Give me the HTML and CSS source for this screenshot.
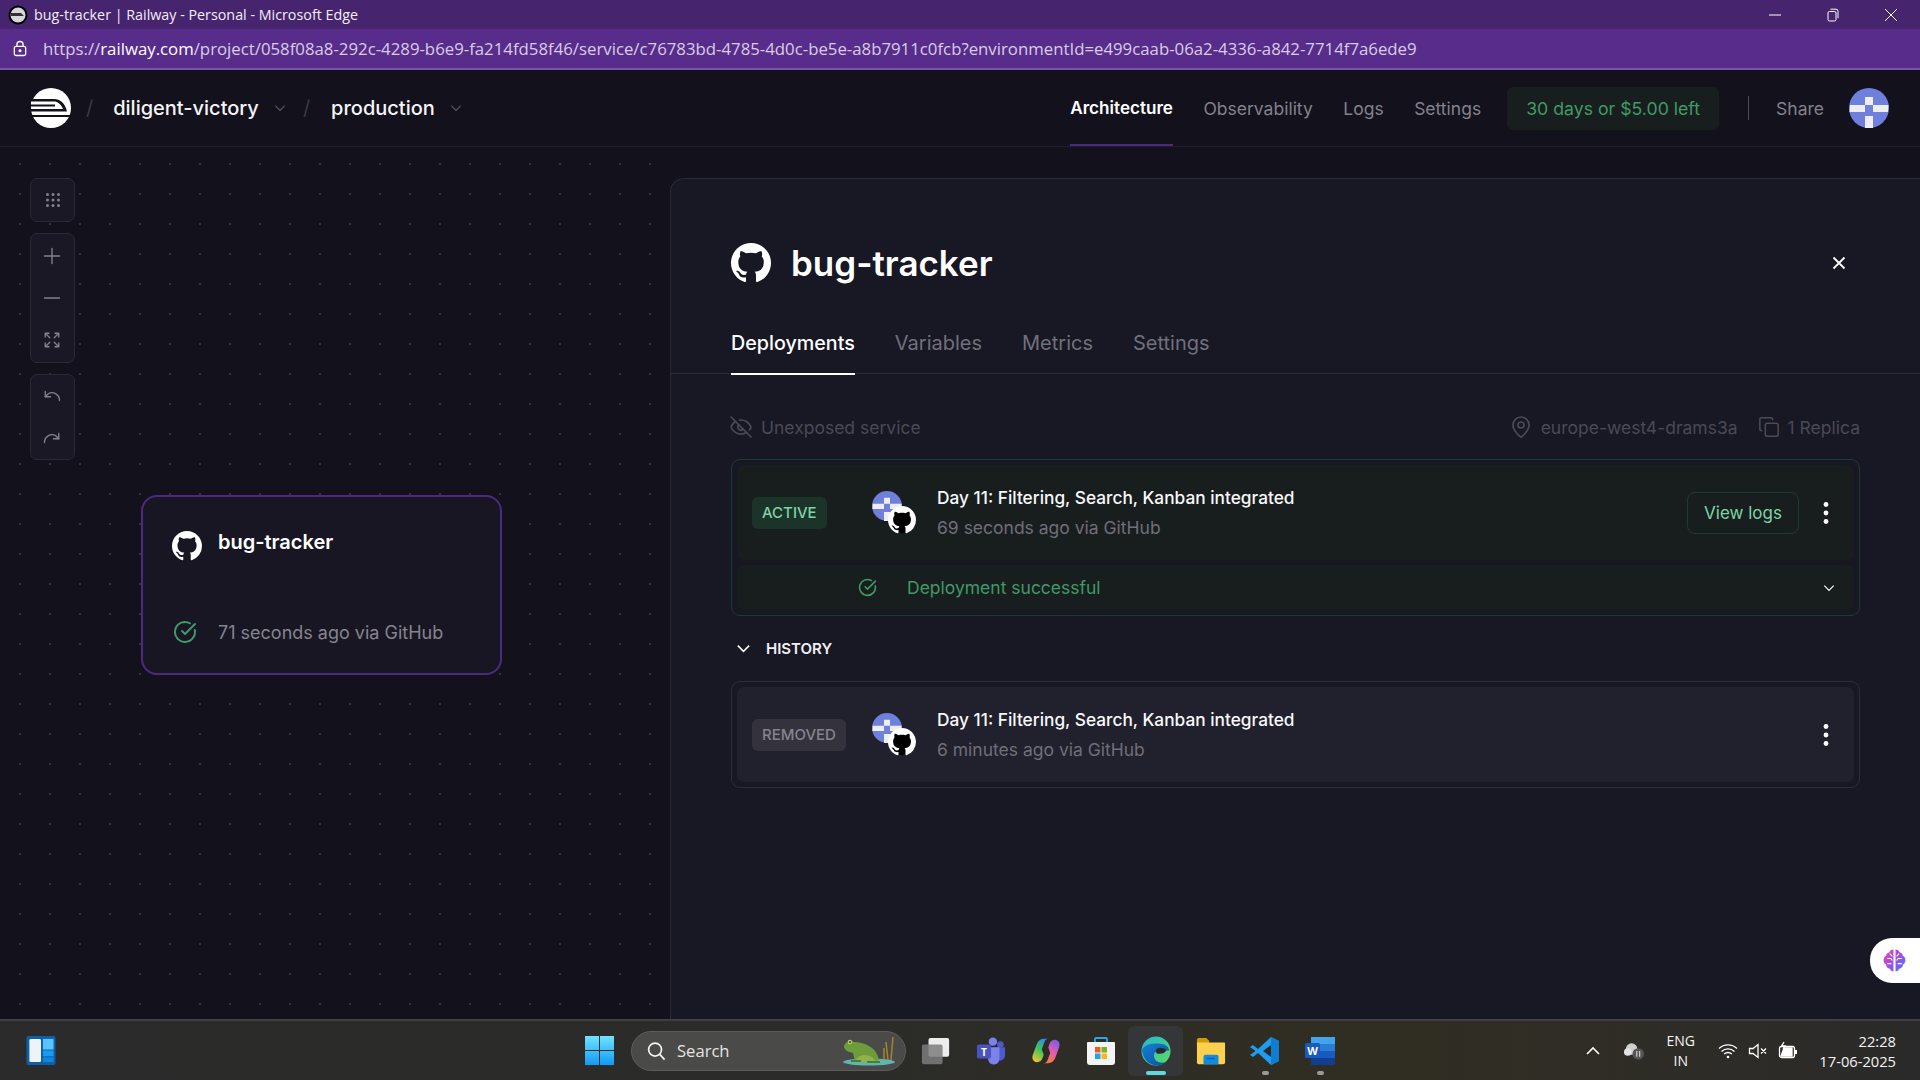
FILE: index.html
```html
<!DOCTYPE html>
<html lang="en">
<head>
    <meta charset="UTF-8">
    <title>bug-tracker | Railway</title>
    <link rel="stylesheet" href="styles.css">
</head>
<body>
    <!-- shared icons -->
    <svg class="sprite" width="0" height="0">
        <symbol id="gh" viewBox="0 0 16 16"><path fill="currentColor" d="M8 0C3.58 0 0 3.58 0 8c0 3.54 2.29 6.53 5.47 7.59.4.07.55-.17.55-.38 0-.19-.01-.82-.01-1.49-2.01.37-2.53-.49-2.69-.94-.09-.23-.48-.94-.82-1.13-.28-.15-.68-.52-.01-.53.63-.01 1.08.58 1.23.82.72 1.21 1.87.87 2.33.66.07-.52.28-.87.51-1.07-1.78-.2-3.64-.89-3.64-3.95 0-.87.31-1.59.82-2.15-.08-.2-.36-1.02.08-2.12 0 0 .67-.21 2.2.82.64-.18 1.32-.27 2-.27.68 0 1.36.09 2 .27 1.53-1.04 2.2-.82 2.2-.82.44 1.1.16 1.92.08 2.12.51.56.82 1.27.82 2.15 0 3.07-1.87 3.75-3.65 3.95.29.25.54.73.54 1.48 0 1.07-.01 1.93-.01 2.2 0 .21.15.46.55.38A8.013 8.013 0 0016 8c0-4.42-3.58-8-8-8z"/></symbol>
        <symbol id="check" viewBox="0 0 24 24"><path d="M21.8 10A10 10 0 1 1 17 3.3"/><path d="m9 11 3 3L22 4"/></symbol>
        <symbol id="chev" viewBox="0 0 24 24"><path d="m4 8 8 8 8-8"/></symbol>
        <symbol id="kebab" viewBox="0 0 8 24"><circle cx="4" cy="3.500" r="2.400"/><circle cx="4" cy="12" r="2.400"/><circle cx="4" cy="20.500" r="2.400"/></symbol>
        <symbol id="identicon" viewBox="0 0 40 40">
            <circle cx="20" cy="20" r="20" fill="#6f7fdc"/>
            <path fill="#eeeef2" d="M16 9h8v8h-8zM1 17h15v7H.5zM24 17h15.5l-.5 7H24zM16 28h8v12h-8z"/>
        </symbol>
        <symbol id="ghbadge" viewBox="0 0 16 16"><circle cx="8" cy="8" r="7.500" fill="#000"/><use href="#gh" color="#fff"/></symbol>
    </svg>

    <div class="titlebar">
        <svg class="tab-icon" viewBox="0 0 20 20"><circle cx="10" cy="10" r="9.500" fill="#000"/><circle cx="10" cy="10" r="7.500" fill="#d8d8dc"/><path d="M3 8h10l3 3H3z" fill="#333"/></svg>
        <span class="title-text">bug-tracker | Railway - Personal - Microsoft Edge</span>
        <div class="win-controls">
            <svg viewBox="0 0 14 14"><path d="M1 7h12"/></svg>
            <svg viewBox="0 0 14 14"><rect x="2" y="3.500" width="8" height="9.500" rx="1.500"/><path d="M4.500 1.200h5.500a2 2 0 0 1 2 2v7"/></svg>
            <svg viewBox="0 0 14 14"><path d="m1 1 12 12M13 1 1 13"/></svg>
        </div>
    </div>
    <div class="urlbar">
        <svg class="lock" viewBox="0 0 16 18"><rect x="1.500" y="6.500" width="13" height="10.500" rx="2"/><path d="M4.500 6.500V4.500a3.500 3.500 0 0 1 7 0v2"/><circle cx="8" cy="11.500" r="1" fill="#fff"/></svg>
        <span class="url"><span class="url-dim">https://</span>railway.com<span class="url-dim">/project/058f08a8-292c-4289-b6e9-fa214fd58f46/service/c76783bd-4785-4d0c-be5e-a8b7911c0fcb?environmentId=e499caab-06a2-4336-a842-7714f7a6ede9</span></span>
    </div>

    <header class="topnav">
        <svg class="logo" viewBox="0 0 40 40">
            <circle cx="20" cy="20" r="20" fill="#fff"/>
            <path fill="#13111c" d="M0 11h23c6 0 11 4 13 12.500H0z"/>
            <path fill="#fff" d="M0 13.500h23c3.500 0 7 2.500 9 7.500H0z"/>
            <path fill="#13111c" d="M0 16.500h24v2H0zM0 27h40v2H0z"/>
        </svg>
        <span class="crumb-sep first">/</span>
        <span class="crumb">diligent-victory</span>
        <svg class="crumb-chev"><use href="#chev"/></svg>
        <span class="crumb-sep">/</span>
        <span class="crumb">production</span>
        <svg class="crumb-chev"><use href="#chev"/></svg>

        <nav class="nav-links">
            <a class="nav-link active">Architecture</a>
            <a class="nav-link">Observability</a>
            <a class="nav-link">Logs</a>
            <a class="nav-link">Settings</a>
        </nav>
        <div class="trial">30 days or $5.00 left</div>
        <div class="nav-divider"></div>
        <a class="nav-link share">Share</a>
        <svg class="avatar"><use href="#identicon"/></svg>
    </header>

    <main class="workspace">
        <section class="canvas">
            <div class="tool-group">
                <button class="tool">
                    <svg viewBox="0 0 16 16" class="fill-icon"><circle cx="2.500" cy="2.500" r="1.500"/><circle cx="8" cy="2.500" r="1.500"/><circle cx="13.500" cy="2.500" r="1.500"/><circle cx="2.500" cy="8" r="1.500"/><circle cx="8" cy="8" r="1.500"/><circle cx="13.500" cy="8" r="1.500"/><circle cx="2.500" cy="13.500" r="1.500"/><circle cx="8" cy="13.500" r="1.500"/><circle cx="13.500" cy="13.500" r="1.500"/></svg>
                </button>
            </div>
            <div class="tool-group">
                <button class="tool"><svg viewBox="0 0 24 24"><path d="M12 2v20M2 12h20"/></svg></button>
                <button class="tool"><svg viewBox="0 0 24 24"><path d="M2 12h20"/></svg></button>
                <button class="tool"><svg viewBox="0 0 24 24"><path d="m15 15 6 6M15 9l6-6M21 16v5h-5M21 8V3h-5M3 16v5h5M3 21l6-6M3 8V3h5M9 9 3 3"/></svg></button>
            </div>
            <div class="tool-group">
                <button class="tool"><svg viewBox="0 0 24 24"><path d="M3 6v7h7"/><path d="M3 13l4-4a10 10 0 0 1 15 9"/></svg></button>
                <button class="tool"><svg viewBox="0 0 24 24"><path d="M21 6v7h-7"/><path d="M21 13l-4-4a10 10 0 0 0-15 9"/></svg></button>
            </div>

            <article class="node">
                <div class="node-head">
                    <svg class="node-gh"><use href="#gh"/></svg>
                    <span class="node-name">bug-tracker</span>
                </div>
                <div class="node-foot">
                    <svg class="node-check"><use href="#check"/></svg>
                    <span class="node-status">71 seconds ago via GitHub</span>
                </div>
            </article>
        </section>

        <section class="panel">
            <div class="panel-head">
                <svg class="panel-gh"><use href="#gh"/></svg>
                <h1 class="panel-title">bug-tracker</h1>
                <svg class="close" viewBox="0 0 14 14"><path d="m1.500 1.500 11 11M12.500 1.500l-11 11"/></svg>
            </div>
            <div class="tabs">
                <a class="tab active">Deployments</a>
                <a class="tab">Variables</a>
                <a class="tab">Metrics</a>
                <a class="tab">Settings</a>
            </div>

            <div class="panel-body">
                <div class="meta">
                    <span class="meta-item eye">
                        <svg viewBox="0 0 24 24"><path d="M10.700 5.100a10.700 10.700 0 0 1 11.200 6.600 1 1 0 0 1 0 .7 10.700 10.700 0 0 1-1.400 2.500"/><path d="M14.100 14.200a3 3 0 0 1-4.200-4.300"/><path d="M17.500 17.500a10.700 10.700 0 0 1-15.400-5.200 1 1 0 0 1 0-.7 10.700 10.700 0 0 1 4.400-5.100"/><path d="m2 2 20 20"/></svg>
                        Unexposed service
                    </span>
                    <span class="meta-right">
                        <span class="meta-item">
                            <svg viewBox="0 0 24 24"><path d="M20 10c0 5-5.500 10.200-7.400 11.800a1 1 0 0 1-1.200 0C9.500 20.200 4 15 4 10a8 8 0 0 1 16 0"/><circle cx="12" cy="10" r="3"/></svg>
                            europe-west4-drams3a
                        </span>
                        <span class="meta-item copies">
                            <svg viewBox="0 0 24 24"><rect width="14" height="14" x="8" y="8" rx="2"/><path d="M4 16c-1.100 0-2-.9-2-2V4c0-1.100.9-2 2-2h10c1.100 0 2 .9 2 2"/></svg>
                            1 Replica
                        </span>
                    </span>
                </div>

                <div class="deploy deploy-active">
                    <div class="deploy-row">
                        <div class="badge-cell"><span class="badge badge-active">ACTIVE</span></div>
                        <div class="deploy-avatar">
                            <svg class="who"><use href="#identicon"/></svg>
                            <svg class="via"><use href="#ghbadge"/></svg>
                        </div>
                        <div class="deploy-text">
                            <div class="commit">Day 11: Filtering, Search, Kanban integrated</div>
                            <div class="when">69 seconds ago via GitHub</div>
                        </div>
                        <div class="deploy-actions">
                            <button class="logs-btn">View logs</button>
                            <svg class="kebab"><use href="#kebab"/></svg>
                        </div>
                    </div>
                    <div class="deploy-status">
                        <svg class="status-check"><use href="#check"/></svg>
                        <span class="status-text">Deployment successful</span>
                        <svg class="status-chev"><use href="#chev"/></svg>
                    </div>
                </div>

                <div class="history-head">
                    <svg class="history-chev"><use href="#chev"/></svg>
                    <span>HISTORY</span>
                </div>

                <div class="deploy deploy-old">
                    <div class="deploy-row">
                        <div class="badge-cell"><span class="badge badge-removed">REMOVED</span></div>
                        <div class="deploy-avatar">
                            <svg class="who"><use href="#identicon"/></svg>
                            <svg class="via"><use href="#ghbadge"/></svg>
                        </div>
                        <div class="deploy-text">
                            <div class="commit">Day 11: Filtering, Search, Kanban integrated</div>
                            <div class="when">6 minutes ago via GitHub</div>
                        </div>
                        <div class="deploy-actions">
                            <svg class="kebab"><use href="#kebab"/></svg>
                        </div>
                    </div>
                </div>
            </div>
        </section>

        <div class="side-tab">
            <svg viewBox="0 0 24 24">
                <defs><linearGradient id="brain" x1="0" x2="1" y1="0" y2="1"><stop offset="0" stop-color="#f0489a"/><stop offset=".5" stop-color="#a24de8"/><stop offset="1" stop-color="#3f7df0"/></linearGradient></defs>
                <path fill="url(#brain)" d="M11 1.500c-2 0-3.300 1-3.700 2.500C5.400 4.200 4 5.600 4 7.400c-1.700.8-2.500 2.400-2.500 4.300 0 1.800.8 3.300 2.400 4.200.1 2.300 1.700 3.800 3.600 4 .6 1.500 2 2.600 3.500 2.600zM13 1.500c2 0 3.300 1 3.700 2.500 1.900.2 3.300 1.600 3.300 3.400 1.700.8 2.500 2.400 2.500 4.300 0 1.800-.8 3.300-2.400 4.200-.1 2.300-1.700 3.800-3.600 4-.6 1.500-2 2.600-3.500 2.600z"/>
                <path fill="none" stroke="#fff" stroke-width="1" d="M5 10h3.500l1.500 2M19 10h-3.500L14 12M5 15h4M19 15h-4M7.500 5.500 10 8M16.500 5.500 14 8"/>
            </svg>
        </div>
    </main>

    <footer class="taskbar">
        <svg class="widgets" viewBox="0 0 30 30">
            <rect width="30" height="30" rx="2" fill="#0f5ea8"/>
            <rect x="3" y="3" width="12" height="24" rx="1.500" fill="#eef3f8"/>
            <rect x="17" y="3" width="11" height="11" fill="#56c4ff"/><rect x="17" y="15" width="11" height="6" fill="#1a9bf0"/><rect x="17" y="22" width="11" height="5" fill="#0f86dc"/>
        </svg>
        <svg class="start" viewBox="0 0 29 29">
            <defs><linearGradient id="winblue" x1="0" x2="0" y1="0" y2="1"><stop offset="0" stop-color="#6fe3ff"/><stop offset="1" stop-color="#0f9bf5"/></linearGradient></defs>
            <path fill="url(#winblue)" d="M0 0h14v14H0zM15 0h14v14H15zM0 15h14v14H0zM15 15h14v14H15z"/>
        </svg>
        <div class="search">
            <svg class="search-glass" viewBox="0 0 20 20"><circle cx="8.500" cy="8.500" r="6.800"/><path d="m13.500 13.500 5 5.500"/></svg>
            <span class="search-label">Search</span>
            <svg class="frog" viewBox="0 0 56 30">
                <ellipse cx="28" cy="26" rx="26" ry="3.500" fill="#5fb6b0"/>
                <path d="M47 24 45 6M50 24 52 1M43 24V12" stroke="#a5842e" stroke-width="1.500" fill="none"/>
                <path d="M3 10c1-4 6-6 10-4 9 0 23 5 25 18l-8 2H14l-2-9C7 16 3 14 3 10z" fill="#6f9c3a"/>
                <path d="M14 26c2-8 14-10 20-2l2 2z" fill="#8fb24a"/>
                <path d="M10 24h10v2H10zM26 25h13v2H26z" fill="#4f7f2e"/>
                <circle cx="9" cy="6" r="2.300" fill="#b7d063"/><circle cx="9" cy="6" r="1" fill="#2f3d18"/>
            </svg>
        </div>
        <div class="apps">
            <div class="app">
                <svg viewBox="0 0 32 30"><rect x="8" y="1" width="22" height="20" rx="2" fill="#ececec"/><rect x="1" y="8" width="22" height="21" rx="2" fill="#7d7d7d" fill-opacity=".85"/></svg>
            </div>
            <div class="app">
                <svg viewBox="0 0 32 30">
                    <circle cx="18" cy="5" r="4.500" fill="#7b83eb"/><circle cx="26" cy="8" r="3.500" fill="#5059c9"/>
                    <path d="M20 11h11v9a5 5 0 0 1-8 4z" fill="#5059c9"/><path d="M10 11h15v12a6 6 0 0 1-12 1z" fill="#7b83eb"/>
                    <rect x="1" y="8" width="15" height="15" rx="2" fill="#4b53bc"/>
                    <text x="8.500" y="20" class="app-letter">T</text>
                </svg>
            </div>
            <div class="app">
                <svg viewBox="0 0 32 30">
                    <defs>
                        <linearGradient id="cop1" x1="0.700" x2="0.200" y1="0" y2="1"><stop offset="0" stop-color="#2f8be8"/><stop offset=".45" stop-color="#3cc45c"/><stop offset="1" stop-color="#f4c430"/></linearGradient>
                        <linearGradient id="cop2" x1="0.300" x2="0.800" y1="1" y2="0"><stop offset="0" stop-color="#f4803a"/><stop offset=".5" stop-color="#e45bb0"/><stop offset="1" stop-color="#7a5be8"/></linearGradient>
                    </defs>
                    <path fill="url(#cop1)" d="M14 2c-4 0-6.500 2-8 6L2 19c-1.500 4 .5 8 4.500 8 3 0 5-2 6-5l1-3-2-6 3-8c.5-1.500 2-3 4-3z"/>
                    <path fill="url(#cop2)" d="M18 28c4 0 6.500-2 8-6l4-11c1.500-4-.5-8-4.500-8-3 0-5 2-6 5l-1 3 2 6-3 8c-.5 1.500-2 3-4 3z"/>
                </svg>
            </div>
            <div class="app">
                <svg viewBox="0 0 30 30">
                    <path d="M9 7V3a1 1 0 0 1 1-1h10a1 1 0 0 1 1 1v4" fill="none" stroke="#29a8e8" stroke-width="1.800"/>
                    <path d="M2 6h26a1 1 0 0 1 1 1v19a3 3 0 0 1-3 3H4a3 3 0 0 1-3-3V7a1 1 0 0 1 1-1z" fill="#f4f4f4"/>
                    <rect x="9" y="11" width="5.500" height="5.500" fill="#ef5a24"/><rect x="15.500" y="11" width="5.500" height="5.500" fill="#7ab51d"/>
                    <rect x="9" y="17.500" width="5.500" height="5.500" fill="#1fa5e8"/><rect x="15.500" y="17.500" width="5.500" height="5.500" fill="#fbb813"/>
                </svg>
            </div>
            <div class="app app-open">
                <svg viewBox="0 0 32 32">
                    <defs>
                        <linearGradient id="edge1" x1="0" x2="1" y1="0" y2="1"><stop offset="0" stop-color="#1fb7d6"/><stop offset="1" stop-color="#5fdc5a"/></linearGradient>
                        <linearGradient id="edge2" x1="0" x2="1" y1="0" y2="1"><stop offset="0" stop-color="#1580d8"/><stop offset="1" stop-color="#0c4f9e"/></linearGradient>
                    </defs>
                    <circle cx="16" cy="16" r="15.500" fill="url(#edge1)"/>
                    <path fill="url(#edge2)" d="M1 15C2 25 9 31.500 17 31.500c4 0 8-2 10-4-5 2-12 1-13-5-1-4 2-7 5-7h11C30 11 25 8 18 8 9 8 3 10 1 15z"/>
                    <path fill="#2a2a2c" d="M20 19c3 0 6-1 7-4-2-2-6-3-9-2-3 1-3 5 0 6z"/>
                </svg>
                <span class="run-mark active"></span>
            </div>
            <div class="app">
                <svg viewBox="0 0 32 28"><path d="M1 2a2 2 0 0 1 2-2h8l3 3v3H1z" fill="#d49a06"/><path d="M1 5h29a1 1 0 0 1 1 1v20a2 2 0 0 1-2 2H3a2 2 0 0 1-2-2z" fill="#fdd14e"/><path d="M8 20a2 2 0 0 1 2-2h12a2 2 0 0 1 2 2v8H8z" fill="#0f8be0"/><path d="M12 22h8" stroke="#0a5fa8" stroke-width="1.500"/></svg>
            </div>
            <div class="app">
                <svg viewBox="0 0 30 30"><path d="M21 1 29 5v20l-8 4L8 17l-5 4-3-2 5.500-4L0 11l3-2 5 4z" fill="#1f9cf0"/><path d="M21 9 13 15l8 6z" fill="#2b2a28"/><path d="M21 1 29 5v20l-8 4z" fill="#0e7fd0"/></svg>
                <span class="run-mark"></span>
            </div>
            <div class="app">
                <svg viewBox="0 0 30 30">
                    <rect x="6" y="1" width="24" height="7.500" fill="#41a5ee"/><rect x="6" y="8" width="24" height="7.500" fill="#2b7cd3"/><rect x="6" y="15" width="24" height="7.500" fill="#185abd"/><rect x="6" y="22" width="24" height="7" fill="#103f91"/>
                    <rect y="7" width="15" height="15" rx="1.500" fill="#185abd"/>
                    <text x="7.500" y="19" class="app-letter">W</text>
                </svg>
                <span class="run-mark"></span>
            </div>
        </div>
        <div class="tray">
            <svg class="tray-chev" viewBox="0 0 14 10"><path d="m1 8 6-6 6 6"/></svg>
            <svg class="tray-cloud" viewBox="0 0 22 20"><circle cx="9" cy="8" r="6" fill="#cfcfcf"/><circle cx="5" cy="11" r="4" fill="#e4e4e4"/><circle cx="16" cy="13" r="6" fill="#555"/><path d="M14.500 10v6M17.500 10v6" stroke="#eee" stroke-width="1"/></svg>
            <div class="lang"><span>ENG</span><span>IN</span></div>
            <div class="tray-icons">
                <svg viewBox="0 0 20 16"><path d="M1 5.500a13 13 0 0 1 18 0M3.500 8.500a9.500 9.500 0 0 1 13 0M6.200 11a5.500 5.500 0 0 1 7.600 0"/><circle cx="10" cy="14" r="1.300" fill="#fff" stroke="none"/></svg>
                <svg viewBox="0 0 20 16"><path d="M1.500 5.500H5L10 1.500v13L5 10.500H1.500zM13 5.500l5 5M18 5.500l-5 5"/></svg>
                <svg viewBox="0 0 20 18"><rect x="1.500" y="4.500" width="15" height="11" rx="2"/><path d="M3 14h11V6H6z" fill="#fff"/><path d="M18 8v4" stroke-width="2"/><path d="M6 0 3.500 4H7L5 7"/></svg>
            </div>
            <div class="clock"><span>22:28</span><span>17-06-2025</span></div>
        </div>
    </footer>
</body>
</html>
```

FILE: styles.css
```css
* {
    box-sizing: border-box;
}
body {
    margin: 0;
    width: 1920px;
    height: 1080px;
    overflow: hidden;
    display: flex;
    flex-direction: column;
    background-color: #13111c;
    color: #fff;
    font-family: 'Inter', sans-serif;
}
.sprite {
    position: absolute;
}

/* browser chrome */
.titlebar {
    height: 29px;
    flex: none;
    display: flex;
    align-items: center;
    padding-left: 8px;
    background-color: #46246e;
    font-family: 'Open Sans', sans-serif;
}
.tab-icon {
    width: 20px;
    height: 20px;
    margin-right: 6px;
}
.title-text {
    font-size: 14.3px;
    color: #f2eef7;
}
.win-controls {
    margin-left: auto;
    display: flex;
    gap: 44px;
    padding-right: 22px;
}
.win-controls svg {
    width: 14px;
    height: 14px;
    fill: none;
    stroke: #fff;
    stroke-width: 1;
}
.urlbar {
    height: 41px;
    flex: none;
    display: flex;
    align-items: center;
    padding-left: 13px;
    background-color: #582c8b;
    border-bottom: 2px solid #7a58a8;
    font-family: 'Open Sans', sans-serif;
}
.lock {
    width: 14px;
    height: 17px;
    margin-right: 16px;
    fill: none;
    stroke: #fff;
    stroke-width: 1.5;
}
.url {
    font-size: 16.8px;
    color: #fff;
    white-space: nowrap;
}
.url-dim {
    color: #d9cde8;
}

/* railway top navigation */
.topnav {
    height: 77px;
    flex: none;
    display: flex;
    align-items: center;
    padding-left: 31px;
    padding-right: 31px;
    border-bottom: 1px solid #201e2b;
    background-color: #13111c;
}
.logo {
    width: 40px;
    height: 40px;
}
.crumb-sep {
    font-size: 20px;
    color: #3a3945;
    margin-left: 16px;
    margin-right: 21px;
}
.crumb-sep.first {
    margin-left: 15px;
    margin-right: 20px;
}
.crumb {
    font-size: 20px;
    font-weight: 500;
    color: #f5f5f7;
}
.crumb-chev {
    width: 14px;
    height: 14px;
    margin-left: 14px;
    fill: none;
    stroke: #5b5a65;
    stroke-width: 2;
}
.nav-links {
    margin-left: auto;
    display: flex;
    gap: 30.5px;
    height: 76px;
}
.nav-link {
    font-size: 17.5px;
    color: #83828c;
    display: flex;
    align-items: center;
    height: 76px;
}
.nav-link.active {
    color: #fff;
    font-size: 17.1px;
    font-weight: 600;
    border-bottom: 2px solid #4c2a80;
}
.trial {
    margin-left: 26px;
    height: 43px;
    padding: 0 19px;
    display: flex;
    align-items: center;
    border-radius: 6px;
    background-color: #181e1e;
    color: #3e9a67;
    font-size: 17.7px;
}
.nav-divider {
    width: 1px;
    height: 24px;
    margin-left: 29px;
    margin-right: 27px;
    background-color: #4a4953;
}
.avatar {
    width: 40px;
    height: 40px;
    margin-left: 25px;
}

/* workspace */
.workspace {
    flex: 1;
    min-height: 0;
    display: flex;
    position: relative;
}
.canvas {
    width: 670px;
    flex: none;
    position: relative;
    padding: 31px 0 0 30px;
    background-image: radial-gradient(circle at 20px 17px, #32313d 0.9px, transparent 1.2px);
    background-size: 30px 30px;
    background-position: 0 0;
}
.tool-group {
    width: 45px;
    margin-bottom: 11px;
    border: 1px solid #2a2935;
    border-radius: 7px;
    background-color: #191824;
}
.tool {
    display: flex;
    align-items: center;
    justify-content: center;
    width: 100%;
    height: 42.4px;
    padding: 0 2px 0 0;
    border: none;
    background: none;
}
.tool svg {
    width: 18px;
    height: 18px;
    fill: none;
    stroke: #83828c;
    stroke-width: 1.8;
    stroke-linecap: round;
    stroke-linejoin: round;
}
.tool svg.fill-icon {
    width: 16px;
    height: 16px;
    margin-left: 2px;
    fill: #83828c;
    stroke: none;
}
.node {
    position: absolute;
    left: 141px;
    top: 348px;
    width: 361px;
    height: 180px;
    padding: 34px 0 0 29px;
    border: 2px solid #4c2a80;
    border-radius: 16px;
    background-color: #181622;
}
.node-head {
    display: flex;
    align-items: flex-start;
    height: 62px;
}
.node-gh {
    width: 30px;
    height: 30px;
    color: #fff;
}
.node-name {
    margin-left: 16px;
    margin-top: -1px;
    font-size: 20px;
    font-weight: 600;
    line-height: 24px;
}
.node-foot {
    display: flex;
    align-items: center;
    margin-top: 27px;
}
.node-check {
    width: 24px;
    height: 24px;
    margin-left: 1px;
    fill: none;
    stroke: #3e9a67;
    stroke-width: 2;
    stroke-linecap: round;
    stroke-linejoin: round;
}
.node-status {
    margin-left: 21px;
    font-size: 18px;
    color: #85848f;
}

/* service panel */
.panel {
    flex: 1;
    margin-top: 31px;
    border-top: 1px solid #2a2935;
    border-left: 1px solid #2a2935;
    border-top-left-radius: 14px;
    background-color: #181724;
}
.panel-head {
    display: flex;
    align-items: center;
    height: 40px;
    margin-top: 64px;
    padding: 0 74px 0 60px;
}
.panel-gh {
    width: 40px;
    height: 40px;
    color: #fff;
}
.panel-title {
    margin: 0 0 0 20px;
    font-size: 35px;
    font-weight: 600;
}
.close {
    margin-left: auto;
    width: 14px;
    height: 14px;
    fill: none;
    stroke: #fff;
    stroke-width: 1.8;
}
.tabs {
    display: flex;
    gap: 40px;
    height: 46px;
    margin-top: 45px;
    padding-left: 60px;
    border-bottom: 1px solid #2c2b37;
}
.tab {
    height: 47px;
    line-height: 30px;
    font-size: 20px;
    color: #71707b;
}
.tab.active {
    color: #fff;
    font-size: 19.7px;
    font-weight: 500;
    border-bottom: 2px solid #fff;
}
.panel-body {
    padding: 39px 60px 0 60px;
}
.meta {
    display: flex;
    justify-content: space-between;
    height: 28px;
    margin-bottom: 18px;
}
.meta-item {
    display: flex;
    align-items: center;
    font-size: 17.5px;
    color: #4a4954;
}
.meta-item svg {
    width: 24px;
    height: 24px;
    margin-right: 8px;
    fill: none;
    stroke: #4a4954;
    stroke-width: 1.7;
    stroke-linecap: round;
    stroke-linejoin: round;
}
.meta-item.eye svg {
    margin-left: -2px;
}
.meta-item.copies svg {
    width: 22px;
    height: 22px;
}
.meta-right {
    display: flex;
    gap: 20px;
}
.deploy {
    display: flex;
    flex-direction: column;
    gap: 5px;
    padding: 5px;
    border: 1px solid;
    border-radius: 9px;
}
.deploy-active {
    border-color: #1f3a2e;
}
.deploy-old {
    border-color: #2e2d3a;
}
.deploy-row {
    display: flex;
    align-items: center;
    height: 95px;
    padding-left: 15px;
    border-radius: 7px;
}
.deploy-active .deploy-row {
    background-color: #181e1e;
}
.deploy-old .deploy-row {
    background-color: #21202d;
}
.badge-cell {
    width: 120px;
    flex: none;
}
.badge {
    display: inline-block;
    height: 32px;
    line-height: 32px;
    padding: 0 10px;
    border-radius: 6px;
    font-size: 15px;
    font-weight: 500;
}
.badge-active {
    background-color: #1b3329;
    color: #7ed4a6;
}
.badge-removed {
    background-color: #33323d;
    color: #85848e;
}
.deploy-avatar {
    position: relative;
    width: 65px;
    height: 44px;
    flex: none;
}
.who {
    width: 30px;
    height: 30px;
}
.via {
    position: absolute;
    left: 16px;
    top: 15px;
    width: 28px;
    height: 28px;
}
.commit {
    font-size: 17.3px;
    font-weight: 500;
    line-height: 24px;
    color: #f8f8fa;
}
.when {
    margin-top: 6px;
    font-size: 17.5px;
    line-height: 24px;
    color: #6f6e79;
}
.deploy-actions {
    margin-left: auto;
    display: flex;
    align-items: center;
    gap: 23px;
    padding-right: 24px;
}
.logs-btn {
    width: 112px;
    height: 42px;
    padding: 0;
    border: 1px solid #1f3a2e;
    border-radius: 8px;
    background: none;
    color: #7ed4a6;
    font-family: inherit;
    font-size: 17px;
}
.kebab {
    width: 8px;
    height: 24px;
    fill: #fff;
}
.deploy-status {
    display: flex;
    align-items: center;
    height: 45px;
    padding-left: 121px;
    padding-right: 18px;
    border-radius: 7px;
    background-color: #181e1e;
}
.status-check {
    width: 19px;
    height: 19px;
    fill: none;
    stroke: #3e9a67;
    stroke-width: 2;
    stroke-linecap: round;
    stroke-linejoin: round;
}
.status-text {
    margin-left: 30px;
    font-size: 17.5px;
    color: #3e9a67;
}
.status-chev {
    margin-left: auto;
    width: 14px;
    height: 14px;
    fill: none;
    stroke: #fff;
    stroke-width: 2;
}
.history-head {
    display: flex;
    align-items: center;
    height: 20px;
    margin: 22px 0 23px;
    padding-left: 4px;
    font-size: 15px;
    font-weight: 600;
    color: #f0f0f3;
}
.history-chev {
    width: 17px;
    height: 17px;
    margin-right: 14px;
    fill: none;
    stroke: #fff;
    stroke-width: 2.2;
}
.side-tab {
    position: absolute;
    right: 0;
    top: 791px;
    width: 50px;
    height: 45px;
    display: flex;
    align-items: center;
    padding-left: 12px;
    border-radius: 22px 0 0 22px;
    background-color: #fff;
}
.side-tab svg {
    width: 25px;
    height: 25px;
}

/* windows taskbar */
.taskbar {
    height: 61px;
    flex: none;
    display: flex;
    align-items: center;
    padding-left: 26px;
    border-top: 2px solid #403f42;
    background: linear-gradient(90deg, #2b2b2b 0%, #2b2b29 45%, #302e22 70%, #2f2d25 82%, #2a2a2a 100%);
    font-family: 'Open Sans', sans-serif;
}
.widgets {
    width: 30px;
    height: 29px;
}
.start {
    width: 29px;
    height: 29px;
    margin-left: 529px;
}
.search {
    width: 275px;
    height: 40px;
    margin-left: 17px;
    display: flex;
    align-items: center;
    padding-left: 15px;
    border: 1px solid #5d5d5b;
    border-radius: 20px;
    background-color: #4a4a48;
}
.search-glass {
    width: 19px;
    height: 20px;
    fill: none;
    stroke: #f4f4f4;
    stroke-width: 1.8;
}
.search-label {
    margin-left: 11px;
    font-size: 16.6px;
    color: #e4e4e4;
}
.frog {
    margin-left: auto;
    margin-right: 8px;
    width: 56px;
    height: 30px;
}
.apps {
    display: flex;
    margin-left: 3px;
}
.app {
    position: relative;
    width: 54.85px;
    height: 50px;
    display: flex;
    align-items: center;
    justify-content: center;
}
.app svg {
    width: 30px;
    height: 30px;
}
.app-open {
    border-radius: 6px;
    background-color: #353637;
}
.app-letter {
    font-family: 'Open Sans', sans-serif;
    font-size: 11px;
    font-weight: 700;
    fill: #fff;
    text-anchor: middle;
}
.run-mark {
    position: absolute;
    left: 50%;
    bottom: 1px;
    width: 7px;
    height: 4px;
    margin-left: -3px;
    border-radius: 2px;
    background-color: #9a9a9a;
}
.run-mark.active {
    width: 20px;
    margin-left: -10px;
    background-color: #62d8de;
}
.tray {
    margin-left: auto;
    display: flex;
    align-items: center;
    padding-right: 24px;
}
.tray-chev {
    width: 14px;
    height: 10px;
    fill: none;
    stroke: #fff;
    stroke-width: 1.6;
}
.tray-cloud {
    width: 21px;
    height: 20px;
    margin-left: 23px;
}
.lang {
    display: flex;
    flex-direction: column;
    align-items: center;
    margin-left: 23px;
    font-size: 14px;
    line-height: 20px;
    color: #f4f4f4;
}
.tray-icons {
    display: flex;
    gap: 10px;
    margin-left: 23px;
}
.tray-icons svg {
    width: 20px;
    height: 18px;
    fill: none;
    stroke: #fff;
    stroke-width: 1.3;
}
.clock {
    display: flex;
    flex-direction: column;
    align-items: flex-end;
    width: 98px;
    font-size: 14.7px;
    line-height: 20px;
    color: #f4f4f4;
}
```
